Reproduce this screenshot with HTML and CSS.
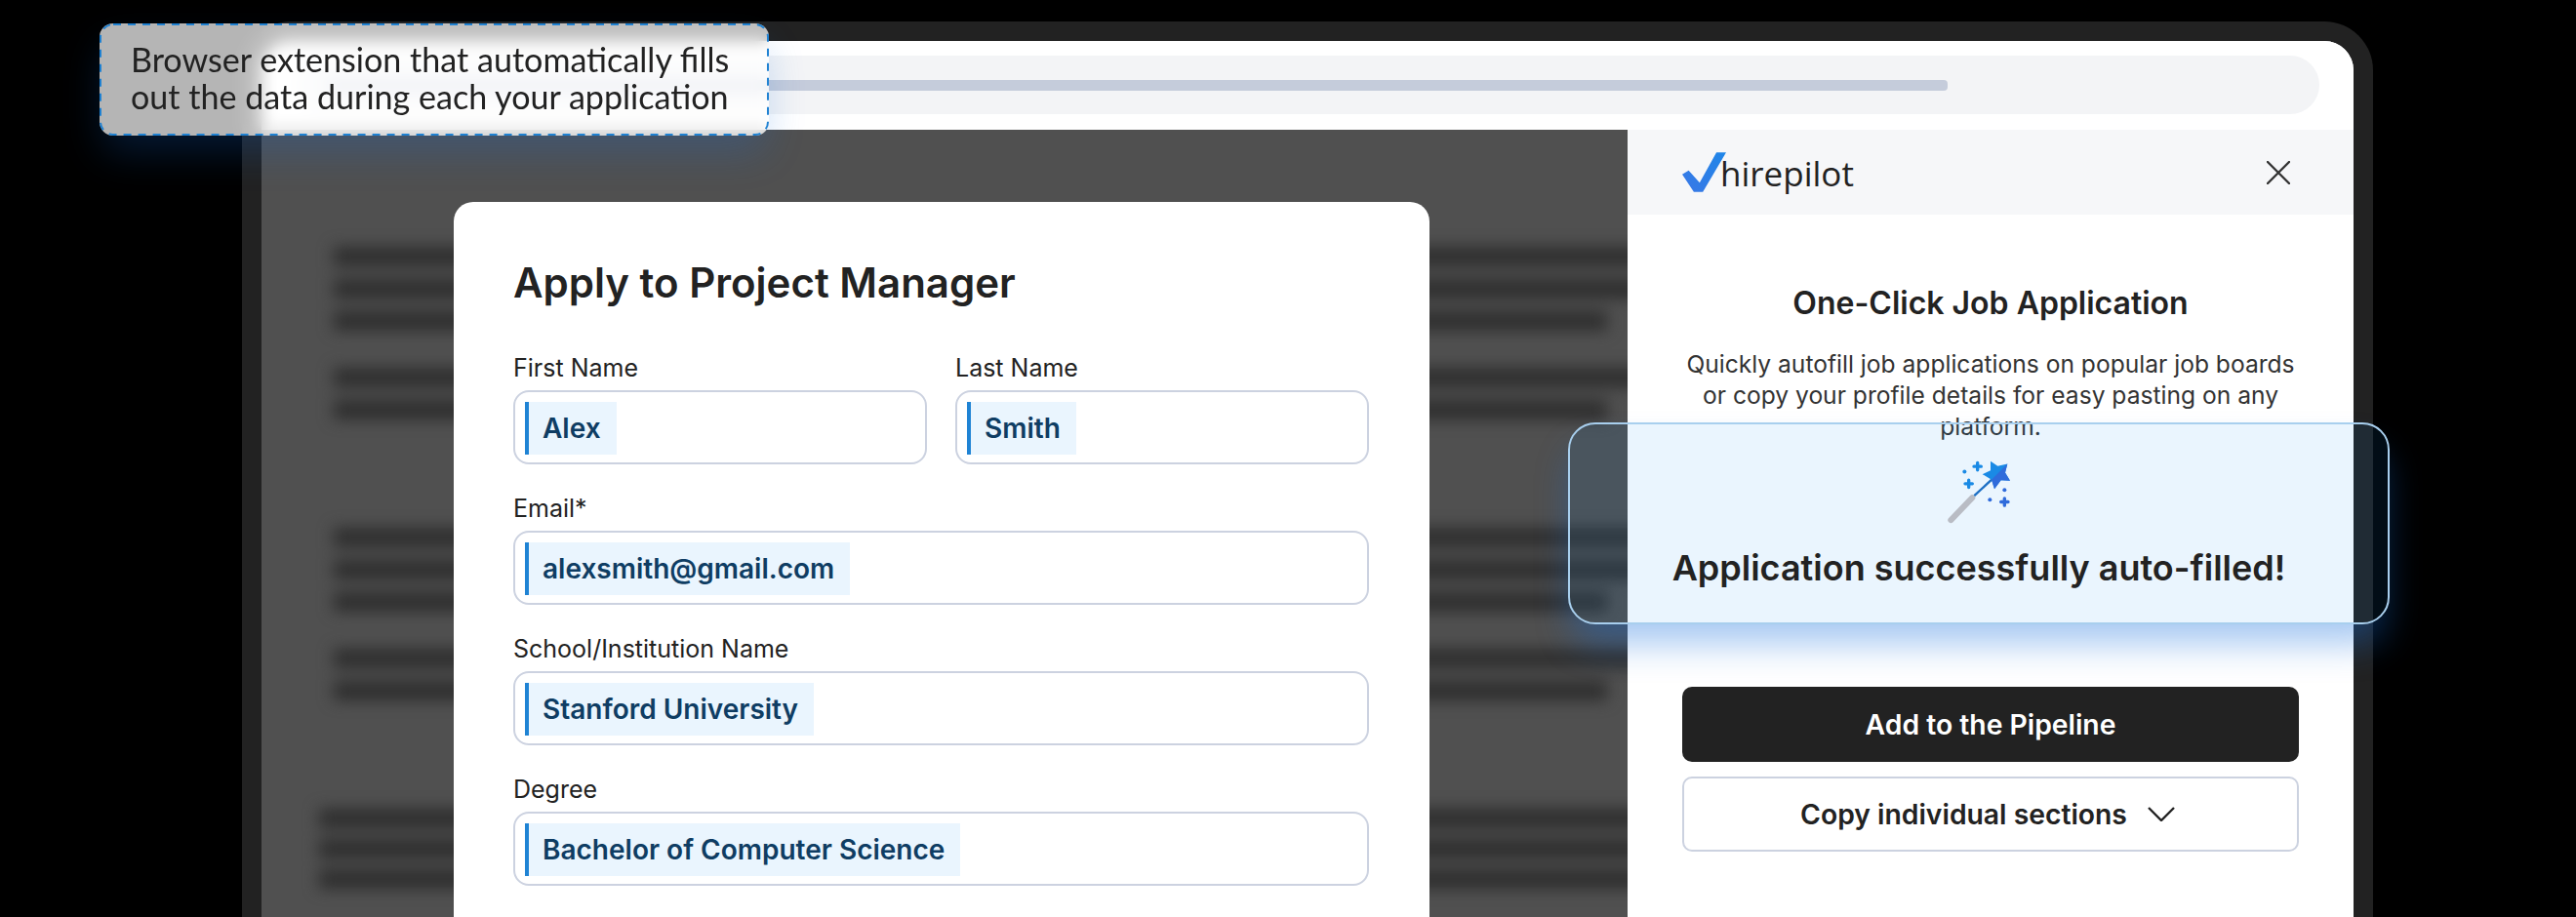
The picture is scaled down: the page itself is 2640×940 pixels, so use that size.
FILE: index.html
```html
<!DOCTYPE html>
<html lang="en">
<head>
<meta charset="utf-8">
<title>Hirepilot</title>
<link rel="stylesheet" href="styles.css">
</head>
<body>
<div class="stage">
  <div class="frame">
    <div class="topbar">
      <div class="urlbar"><div class="urlfill"></div></div>
    </div>
    <div class="screen">
      <div class="page">
        <div class="bars">
          <div class="group"><div class="bar"></div><div class="bar"></div><div class="bar short"></div></div>
          <div class="group"><div class="bar"></div><div class="bar short"></div></div>
          <div class="group"><div class="bar"></div><div class="bar"></div><div class="bar short"></div></div>
          <div class="group"><div class="bar"></div><div class="bar short"></div></div>
          <div class="group wide"><div class="bar"></div><div class="bar"></div><div class="bar"></div></div>
        </div>
        <div class="modal">
          <h1 class="modal-title">Apply to Project Manager</h1>
          <div class="form">
            <div class="row">
              <div class="field"><div class="label">First Name</div><div class="input"><span class="chip">Alex</span></div></div>
              <div class="field"><div class="label">Last Name</div><div class="input"><span class="chip">Smith</span></div></div>
            </div>
            <div class="field"><div class="label">Email*</div><div class="input"><span class="chip">alexsmith@gmail.com</span></div></div>
            <div class="field"><div class="label">School/Institution Name</div><div class="input"><span class="chip">Stanford University</span></div></div>
            <div class="field"><div class="label">Degree</div><div class="input"><span class="chip">Bachelor of Computer Science</span></div></div>
          </div>
        </div>
      </div>
      <aside class="panel">
        <header class="panel-head">
          <div class="logo">
            <svg class="logo-check" viewBox="72 72 136 123" aria-hidden="true">
              <defs><linearGradient id="chk" x1="0" y1="1" x2="1" y2="0"><stop offset="0" stop-color="#3a78e6"/><stop offset="1" stop-color="#1f86e8"/></linearGradient></defs>
              <path d="M72 140 L92 128 L126 166 L178 72 L208 72 L136 195 L108 195 Z" fill="url(#chk)"/>
            </svg>
            <span class="logo-text">hirepilot</span>
          </div>
          <svg class="close" viewBox="0 0 24 24" aria-hidden="true"><path d="M1 1 L23 23 M23 1 L1 23"/></svg>
        </header>
        <div class="panel-body">
          <h2 class="panel-title">One-Click Job Application</h2>
          <p class="panel-text">Quickly autofill job applications on popular job boards or copy your profile details for easy pasting on any platform.</p>
          <button class="btn btn-dark">Add to the Pipeline</button>
          <button class="btn btn-light">Copy individual sections
            <svg class="chev" viewBox="0 0 28 15" aria-hidden="true"><path d="M1 1 L14 14 L27 1"/></svg>
          </button>
        </div>
      </aside>
    </div>
  </div>

  <div class="tip">
    <svg class="tip-dash" aria-hidden="true"><rect x="1" y="1" rx="13" ry="13"/></svg>
    <p class="tip-text">Browser extension that automatically fills<br>out the data during each your application</p>
  </div>

  <div class="toast">
    <svg class="wand" viewBox="108 98 192 194" aria-hidden="true">
      <path class="wand-handle" d="M118 281 L184 212"/>
      <path class="wand-stick" d="M190 206 L245 155"/>
      <path class="star-a" d="M240 100 L262 115 L292 108 L285 135 L300 160 L272 158 L252 185 L243 157 L215 140 L240 128 Z"/>
      <path class="star-b" d="M292 108 L285 135 L300 160 L272 158 L252 185 L243 157 Z"/>
      <path class="spark-a" d="M200 105 V127 M189 116 H211 M173 158 V180 M162 169 H184"/>
      <path class="spark-b" d="M283 214 V236 M272 225 H294"/>
      <circle class="dot-a" cx="160" cy="132" r="6"/>
      <circle class="dot-b" cx="283" cy="188" r="6"/>
      <circle class="dot-b" cx="238" cy="218" r="6"/>
    </svg>
    <div class="toast-text">Application successfully auto-filled!</div>
  </div>
</div>
</body>
</html>
```
FILE: styles.css
```css
* { box-sizing: border-box; }
html, body { margin: 0; padding: 0; background: #000; }
.stage {
  position: relative;
  width: 2640px;
  height: 940px;
  overflow: hidden;
  background: #000;
  padding: 22px 208px 0 248px;
  font-family: Inter, "Liberation Sans", sans-serif;
  color: #222;
}
.frame {
  height: 960px;
  border: 20px solid #222;
  border-bottom: 0;
  border-radius: 50px 50px 0 0;
  background: #fff;
  overflow: hidden;
  display: flex;
  flex-direction: column;
}
.topbar { height: 91px; flex: none; padding: 15px 35px 0; background: #fff; }
.urlbar {
  height: 60px;
  border-radius: 30px;
  background: #f3f4f6;
  padding: 25px 381px 0 32px;
}
.urlfill { height: 11px; border-radius: 4px; background: #c5ccdb; }
.screen { flex: 1; display: flex; min-height: 0; }

.page {
  position: relative;
  width: 1400px;
  flex: none;
  background: #505050;
  overflow: hidden;
}
.bars {
  display: flex;
  flex-direction: column;
  padding: 120px 0 0 74px;
  filter: blur(8px);
}
.group { display: flex; flex-direction: column; gap: 13px; margin-bottom: 38px; }
.group:nth-child(2), .group:nth-child(4) { margin-bottom: 111px; }
.group.wide { margin-left: -15px; gap: 11px; }
.bar { height: 20px; width: 1400px; background: #2e2e2e; }
.bar.short { width: 1305px; }

.modal {
  position: absolute;
  left: 197px;
  top: 74px;
  width: 1000px;
  height: 900px;
  background: #fff;
  border-radius: 20px;
  padding: 53px 62px 0 61px;
}
.modal-title {
  margin: 0 0 41px;
  font-size: 42px;
  line-height: 60px;
  font-weight: 600;
  color: #222;
}
.form { display: flex; flex-direction: column; gap: 29px; }
.row { display: grid; grid-template-columns: 1fr 1fr; gap: 29px; }
.label { font-size: 25px; line-height: 32px; margin-bottom: 7px; color: #222; }
.input {
  height: 76px;
  border: 2px solid #ccd2e0;
  border-radius: 16px;
  padding: 10px 9px 0 10px;
  display: flex;
  align-items: flex-start;
}
.chip {
  height: 54px;
  display: flex;
  align-items: center;
  padding: 0 16px 0 14px;
  background: #eaf5fe;
  border-left: 4px solid #1f83d4;
  font-size: 28px;
  font-weight: 600;
  color: #0f3d63;
}

.panel { flex: 1; background: #fff; display: flex; flex-direction: column; }
.panel-head {
  height: 87px;
  flex: none;
  background: #f6f7f9;
  padding: 0 65px 0 56px;
  display: flex;
  align-items: center;
  justify-content: space-between;
}
.logo { display: flex; align-items: center; }
.logo-check { width: 45px; height: 41px; flex: none; }
.logo-text {
  font-family: "Open Sans", sans-serif;
  font-size: 35px;
  line-height: 40px;
  margin: 2px 0 0 -6px;
  color: #222;
}
.close { width: 24px; height: 24px; }
.close path { stroke: #333; stroke-width: 2.4; fill: none; stroke-linecap: round; }
.panel-body {
  flex: 1;
  display: flex;
  flex-direction: column;
  align-items: stretch;
  padding: 70px 56px 0;
}
.panel-title {
  margin: 0;
  text-align: center;
  font-size: 32px;
  line-height: 42px;
  font-weight: 600;
  color: #222;
}
.panel-text {
  margin: 25px 0 0;
  height: 347px;
  flex: none;
  text-align: center;
  font-size: 24.6px;
  line-height: 32px;
  color: #333;
}
.btn {
  font-family: inherit;
  font-size: 28.3px;
  font-weight: 600;
  height: 77px;
  flex: none;
  width: 100%;
  border-radius: 10px;
  display: flex;
  align-items: center;
  justify-content: center;
  padding: 0;
}
.btn-dark { background: #222; color: #fff; border: 0; margin-bottom: 15px; }
.btn-light { background: #fff; color: #222; border: 2px solid #ccd2e0; gap: 21px; padding-right: 6px; }
.chev { width: 28px; height: 15px; }
.chev path { stroke: #222; stroke-width: 2.4; fill: none; }

.tip {
  position: absolute;
  left: 102px;
  top: 24px;
  width: 686px;
  height: 115px;
  border-radius: 14px;
  background: rgba(255, 255, 255, 0.71);
  -webkit-backdrop-filter: blur(8px);
  backdrop-filter: blur(8px);
  box-shadow: 0 20px 40px -4px rgba(20, 110, 220, 0.24);
  padding: 18px 0 0 32px;
}
.tip-dash { position: absolute; left: 0; top: 0; width: 686px; height: 115px; }
.tip-dash rect {
  width: 684px;
  height: 113px;
  fill: none;
  stroke: #2082d2;
  stroke-width: 2;
  stroke-dasharray: 8 7;
}
.tip-text {
  margin: 0;
  font-family: Lato, sans-serif;
  font-size: 34.1px;
  line-height: 38px;
  color: #222;
  white-space: nowrap;
}

.toast {
  position: absolute;
  left: 1607px;
  top: 433px;
  width: 842px;
  height: 207px;
  border: 2px solid #a8cfee;
  border-radius: 28px;
  background: rgba(22, 144, 244, 0.09);
  box-shadow: 0 24px 36px -4px rgba(20, 110, 220, 0.38);
  display: flex;
  flex-direction: column;
  align-items: center;
  padding-top: 37px;
}
.wand { width: 64px; height: 65px; flex: none; }
.wand-handle { stroke: #b9bcc4; stroke-width: 18; stroke-linecap: round; fill: none; }
.wand-stick { stroke: #1c6fc4; stroke-width: 7; fill: none; }
.star-a { fill: #1a8ae5; }
.star-b { fill: #2f6bdb; }
.spark-a { stroke: #1a8ae5; stroke-width: 10; stroke-linecap: round; fill: none; }
.spark-b { stroke: #2f6bdb; stroke-width: 10; stroke-linecap: round; fill: none; }
.dot-a { fill: #1a8ae5; }
.dot-b { fill: #2f6bdb; }
.toast-text {
  margin-top: 22px;
  font-size: 36px;
  line-height: 46px;
  font-weight: 600;
  color: #222;
  white-space: nowrap;
}
```
